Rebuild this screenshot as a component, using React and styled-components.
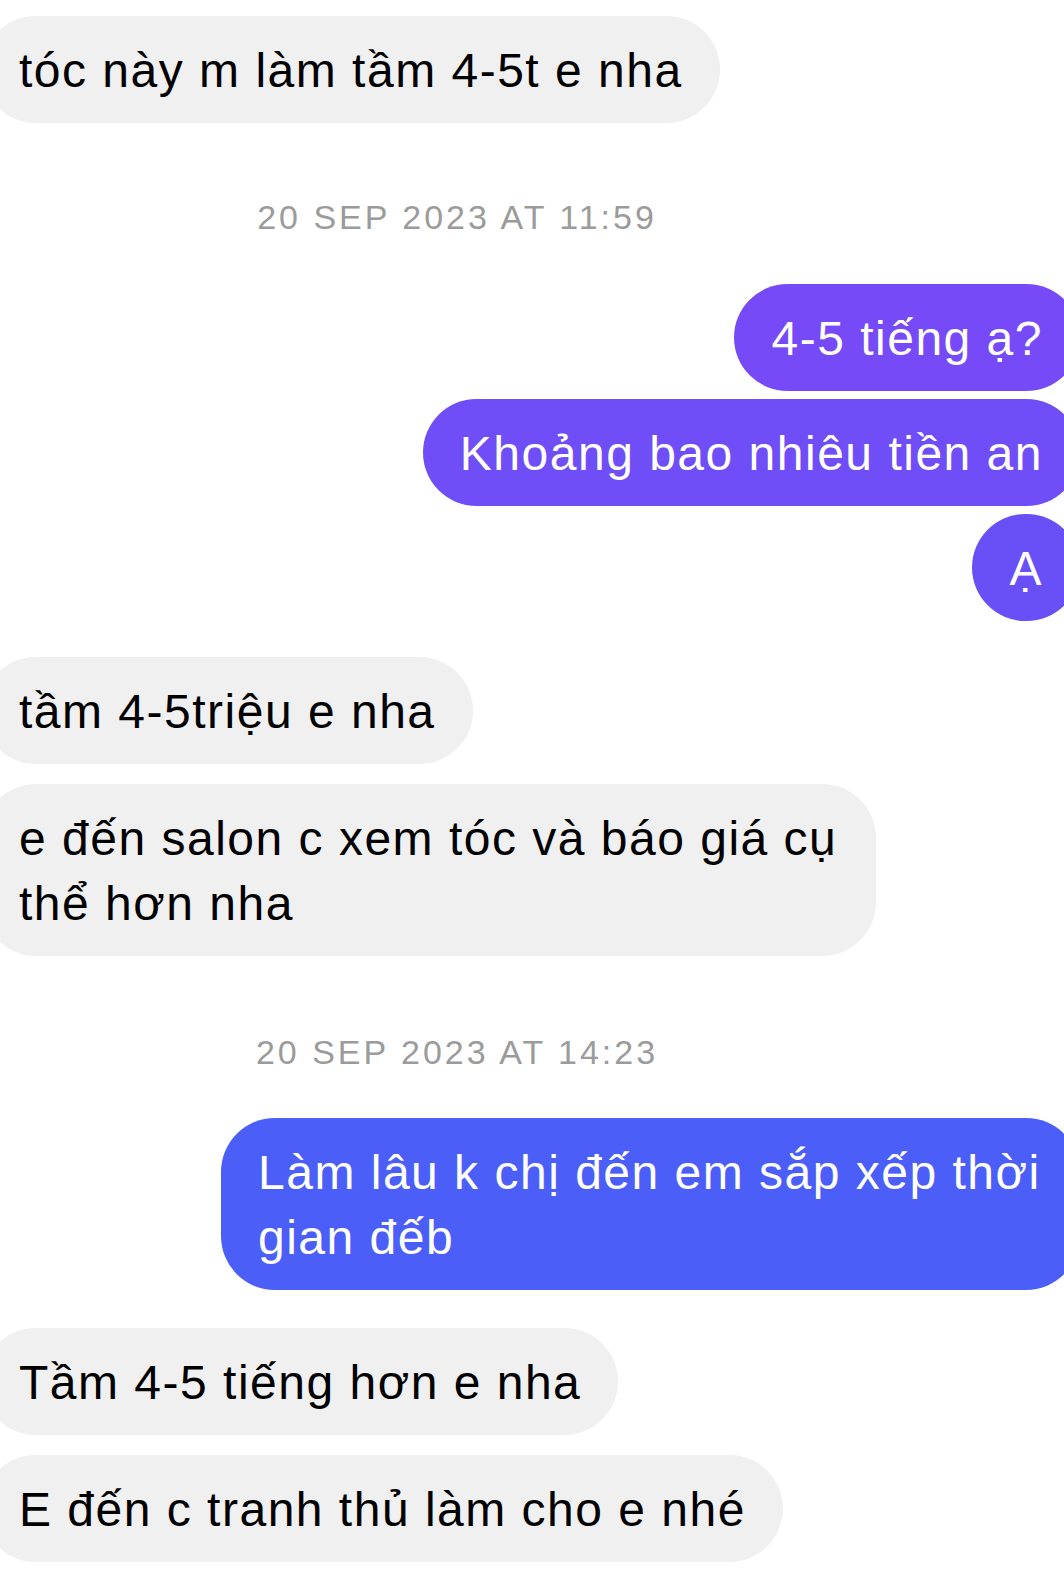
import React from 'react';
import styled, { createGlobalStyle } from 'styled-components';

const GlobalStyle = createGlobalStyle`
  html, body {
    margin: 0;
    padding: 0;
    background: #ffffff;
    overflow: hidden;
  }
`;

const Thread = styled.div`
  width: 1064px;
  min-height: 1591px;
  padding-top: 16px;
  display: flex;
  flex-direction: column;
  font-family: 'Liberation Sans', Arial, sans-serif;
  overflow: hidden;
`;

const Row = styled.div`
  display: flex;
  justify-content: ${props => (props.$out ? 'flex-end' : 'flex-start')};
  margin-top: ${props => props.$mt || 0}px;
`;

const Bubble = styled.div`
  box-sizing: border-box;
  min-height: 107px;
  max-width: ${props => (props.$out ? 859 : 894)}px;
  padding: 22px 37px 20px;
  border-radius: 54px;
  font-size: 48px;
  line-height: 65px;
  letter-spacing: 1.5px;
  color: ${props => (props.$out ? '#ffffff' : '#000000')};
  background: ${props => props.$bg || '#f0f0f0'};
  margin-left: ${props => (props.$out ? 0 : -18)}px;
  margin-right: ${props => (props.$out ? -16 : 0)}px;
`;

// timestamps sit a bit left of the page centre in the original capture
const Stamp = styled.div`
  text-align: center;
  font-size: 34px;
  line-height: 40px;
  letter-spacing: 3px;
  color: #9b9b9b;
  margin-top: ${props => props.$mt}px;
  padding-right: 150px;
`;

const App = () => (
  <>
    <GlobalStyle />
    <Thread>
      <Row>
        <Bubble>tóc này m làm tầm 4-5t e nha</Bubble>
      </Row>

      <Stamp $mt={74}>20 SEP 2023 AT 11:59</Stamp>

      <Row $out $mt={47}>
        <Bubble $out $bg="#774af8">4-5 tiếng ạ?</Bubble>
      </Row>
      <Row $out $mt={8}>
        <Bubble $out $bg="#6f4df7">Khoảng bao nhiêu tiền an</Bubble>
      </Row>
      <Row $out $mt={8}>
        <Bubble $out $bg="#6950f6">Ạ</Bubble>
      </Row>

      <Row $mt={36}>
        <Bubble>tầm 4-5triệu e nha</Bubble>
      </Row>
      <Row $mt={20}>
        <Bubble>e đến salon c xem tóc và báo giá cụ thể hơn nha</Bubble>
      </Row>

      <Stamp $mt={76}>20 SEP 2023 AT 14:23</Stamp>

      <Row $out $mt={46}>
        <Bubble $out $bg="#4b5ff8">Làm lâu k chị đến em sắp xếp thời gian đếb</Bubble>
      </Row>

      <Row $mt={38}>
        <Bubble>Tầm 4-5 tiếng hơn e nha</Bubble>
      </Row>
      <Row $mt={20}>
        <Bubble>E đến c tranh thủ làm cho e nhé</Bubble>
      </Row>
    </Thread>
  </>
);

export default App;
